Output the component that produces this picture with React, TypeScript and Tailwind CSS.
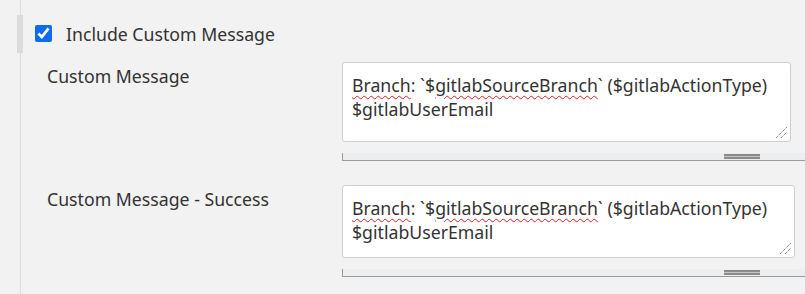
import type { ReactNode } from "react";

const font = { fontFamily: '"Segoe UI", "Noto Sans", "Open Sans", sans-serif' };

function Grip() {
  return (
    <svg width="13" height="13" viewBox="0 0 13 13" className="absolute right-[2px] bottom-[2px]">
      <line x1="1" y1="12" x2="12" y2="1" stroke="#555" strokeWidth="1" strokeDasharray="1 1" />
      <line x1="6" y1="12" x2="12" y2="6" stroke="#555" strokeWidth="1" strokeDasharray="1 1" />
    </svg>
  );
}

function FakeTextarea({ size }: { size: string }) {
  return (
    <div>
      <div
        className={`relative ${size} rounded-[3px] border border-[#cfcfcf] bg-white pl-[9px] pt-[10px] text-[17.7px] leading-[24px] text-[#333]`}
      >
        <div>
          <span className="underline decoration-wavy decoration-[#e02020] decoration-1 underline-offset-[3px]">Branch</span>
          : `$
          <span className="underline decoration-wavy decoration-[#e02020] decoration-1 underline-offset-[3px]">gitlabSourceBranch</span>
          ` ($gitlabActionType)
        </div>
        <div>$gitlabUserEmail</div>
        <Grip />
      </div>
      <div className="mt-[11px] flex h-[8px] border-b border-l border-[#9a9a9a] bg-[#eceef0]">
        <div className="flex-1" />
        <div className="mr-[45px] mt-[1px] h-[5px] w-[36px] border-y-2 border-[#8a8a8a] bg-[#c4c4c4]" />
      </div>
    </div>
  );
}

function Row({ label, children, className }: { label: string; children: ReactNode; className?: string }) {
  return (
    <div className={`flex ${className ?? ""}`}>
      <div className="w-[319px] shrink-0 pl-[24px] pt-[2px] text-[17.7px] leading-[24px] text-[#333]">{label}</div>
      <div className="flex-1">{children}</div>
    </div>
  );
}

export default function App() {
  return (
    <div className="flex h-[294px] w-[805px] overflow-hidden bg-[#f2f2f2]" style={font}>
      <div className="ml-[17px] flex w-[6px] shrink-0 flex-col items-start">
        <div className="ml-[3px] h-[15px] w-px bg-[#dcdcdc]" />
        <div className="h-[38px] w-[6px] bg-[#dcdcdc]" />
        <div className="ml-[3px] w-px flex-1 bg-[#dcdcdc]" />
      </div>
      <div className="flex-1">
        <label className="mt-[25px] flex h-[17px] items-center">
          <input type="checkbox" defaultChecked className="ml-[12px] h-[17px] w-[17px] accent-[#0b6cf0]" />
          <span className="ml-[14px] text-[17.7px] leading-[24px] text-[#333]">Include Custom Message</span>
        </label>
        <Row label="Custom Message" className="mt-[20px]">
          <FakeTextarea size="h-[80px] w-[449px]" />
        </Row>
        <Row label="Custom Message - Success" className="mt-[24px]">
          <FakeTextarea size="h-[73px] w-[453px]" />
        </Row>
      </div>
    </div>
  );
}
